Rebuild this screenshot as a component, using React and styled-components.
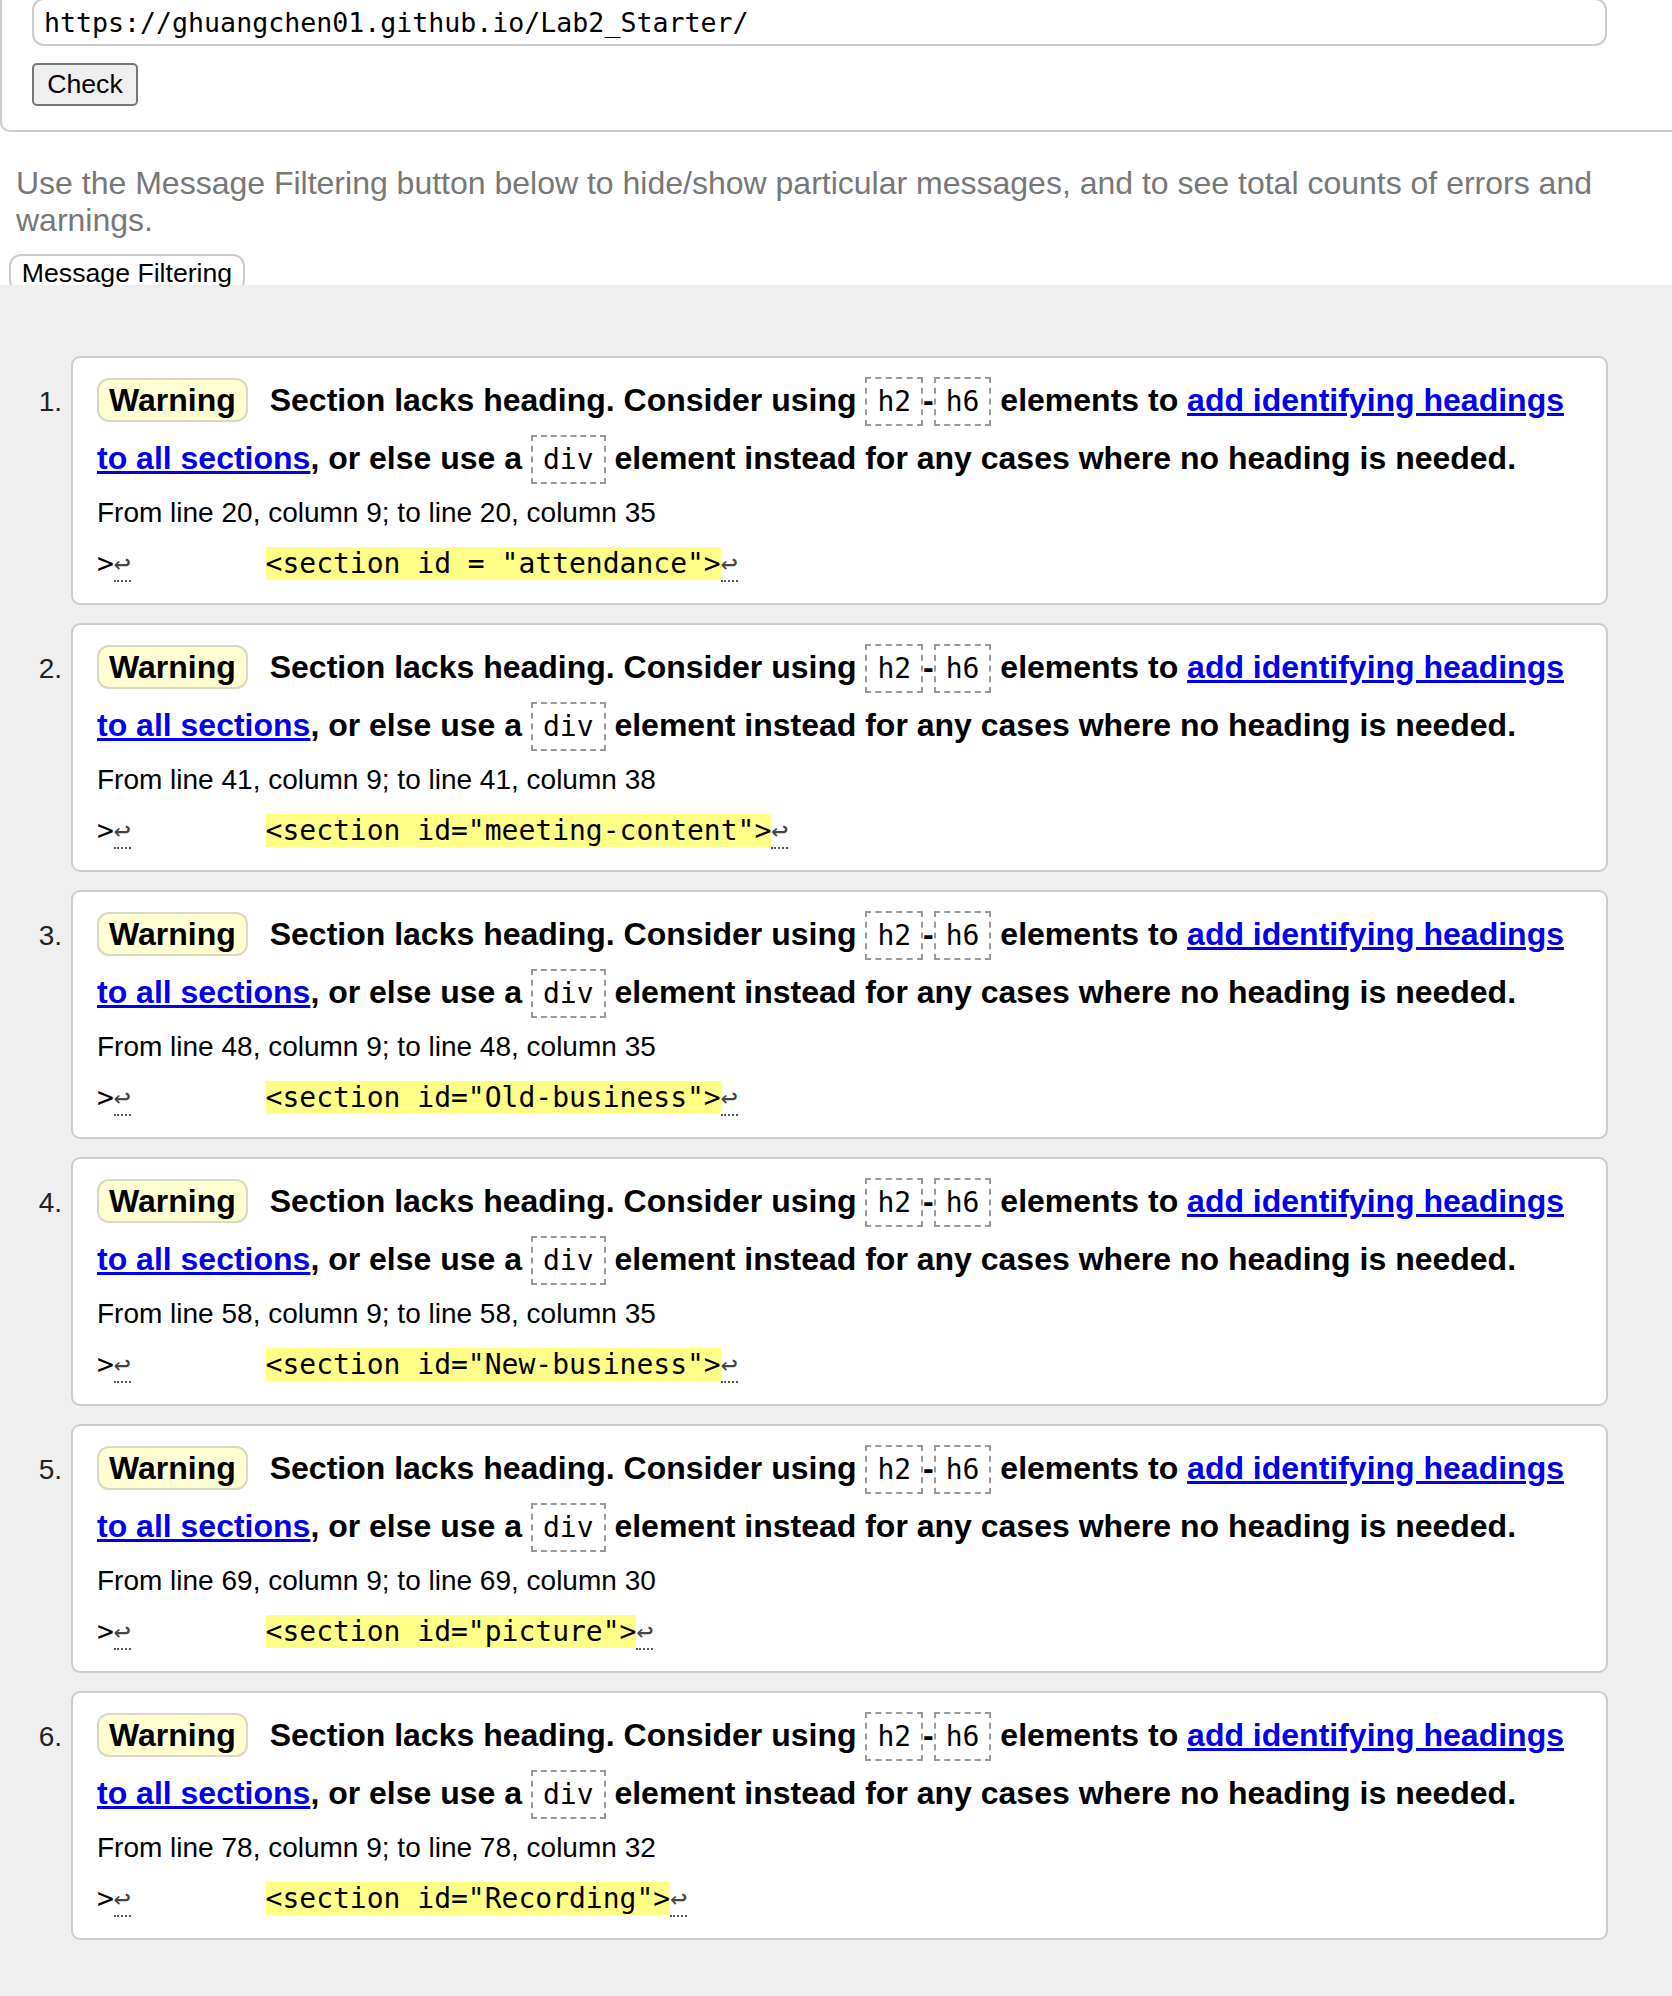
import React from "react";
import styled, { createGlobalStyle } from "styled-components";

const GlobalStyle = createGlobalStyle`
  html, body {
    margin: 0;
    padding: 0;
    background: #fff;
  }
  body {
    font-family: "Liberation Sans", Arial, sans-serif;
    color: #000;
  }
`;

const messages = [
  { from: 20, to: 20, colTo: 35, snippet: '<section id = "attendance">' },
  { from: 41, to: 41, colTo: 38, snippet: '<section id="meeting-content">' },
  { from: 48, to: 48, colTo: 35, snippet: '<section id="Old-business">' },
  { from: 58, to: 58, colTo: 35, snippet: '<section id="New-business">' },
  { from: 69, to: 69, colTo: 30, snippet: '<section id="picture">' },
  { from: 78, to: 78, colTo: 32, snippet: '<section id="Recording">' },
];

export default function App() {
  return (
    <>
      <GlobalStyle />
      <TopArea>
        <CheckForm>
          <UrlInput defaultValue="https://ghuangchen01.github.io/Lab2_Starter/" />
          <CheckButton>Check</CheckButton>
        </CheckForm>
        <Hint>
          Use the Message Filtering button below to hide/show particular messages, and to see total
          counts of errors and warnings.
        </Hint>
        <FilterButton>Message Filtering</FilterButton>
      </TopArea>

      <Results>
        <MessageList>
          {messages.map((m, i) => (
            <MessageRow key={i}>
              <Num>{i + 1}.</Num>
              <Card>
                <MessageText>
                  <Badge>Warning</Badge> Section lacks heading. Consider using{" "}
                  <InlineCode>h2</InlineCode>-<InlineCode>h6</InlineCode> elements to{" "}
                  <DocLink href="#">add identifying headings to all sections</DocLink>, or else
                  use a <InlineCode>div</InlineCode> element instead for any cases where no
                  heading is needed.
                </MessageText>
                <Location>
                  From line {m.from}, column 9; to line {m.to}, column {m.colTo}
                </Location>
                <Extract>
                  {">"}
                  <LineBreak title="Line break">↩</LineBreak>
                  {"        "}
                  <Highlight>{m.snippet}</Highlight>
                  <LineBreak title="Line break">↩</LineBreak>
                </Extract>
              </Card>
            </MessageRow>
          ))}
        </MessageList>
      </Results>
    </>
  );
}

const TopArea = styled.div`
  display: flow-root;
  background: #fff;
`;

const CheckForm = styled.form`
  margin-top: -2px;
  padding: 0 0 24px 30px;
  border-left: 2px solid #ccc;
  border-bottom: 2px solid #ccc;
  border-bottom-left-radius: 10px;
`;

const UrlInput = styled.input`
  display: block;
  box-sizing: border-box;
  width: 1575px;
  height: 48px;
  margin: 0 0 17px;
  padding: 0 10px;
  border: 2px solid #ccc;
  border-radius: 12px;
  font-family: "DejaVu Sans Mono", Menlo, monospace;
  font-size: 26.6px;
  color: #000;
  background: #fff;
  outline: none;
`;

const CheckButton = styled.button`
  display: block;
  box-sizing: border-box;
  width: 106px;
  height: 43px;
  padding: 0;
  border: 2px solid #777;
  border-radius: 5px;
  background: #efefef;
  font-family: "Liberation Sans", Arial, sans-serif;
  font-size: 26.67px;
  color: #000;
`;

const Hint = styled.p`
  margin: 33px 16px 15px;
  font-size: 32px;
  line-height: 37px;
  color: #777;
`;

const FilterButton = styled.button`
  display: block;
  box-sizing: border-box;
  width: 236px;
  height: 38px;
  margin: 0 0 -7px 9px;
  padding: 0;
  border: 2px solid #ccc;
  border-radius: 12px;
  background: #fff;
  font-family: "Liberation Sans", Arial, sans-serif;
  font-size: 26.67px;
  color: #000;
`;

const Results = styled.div`
  background: #efefef;
  padding: 71px 0 60px;
`;

const MessageList = styled.ol`
  list-style: none;
  margin: 0;
  padding: 0;
  display: flex;
  flex-direction: column;
  gap: 18px;
`;

const MessageRow = styled.li`
  display: flex;
  align-items: baseline;
  gap: 9px;
`;

const Num = styled.span`
  flex: 0 0 62px;
  text-align: right;
  font-size: 28px;
  color: #222;
`;

const Card = styled.div`
  box-sizing: border-box;
  width: 1537px;
  padding: 13px 24px 23px;
  background: #fff;
  border: 2px solid #ccc;
  border-radius: 9px;
`;

const MessageText = styled.p`
  margin: 0;
  font-size: 32px;
  line-height: 58px;
  font-weight: bold;
`;

const Badge = styled.strong`
  margin-right: 13px;
  padding: 2px 10px;
  background: #ffffd2;
  border: 2px solid #d9d9c4;
  border-radius: 12px;
`;

const InlineCode = styled.code`
  padding: 6px 10px;
  border: 2px dashed #999;
  font-family: "DejaVu Sans Mono", Menlo, monospace;
  font-size: 28px;
  line-height: 33px;
  font-weight: normal;
`;

const DocLink = styled.a`
  color: #0000ee;
  text-decoration: underline;
`;

const Location = styled.p`
  margin: 10px 0 0;
  font-size: 28px;
  line-height: 32px;
`;

const Extract = styled.p`
  margin: 18px 0 0;
  font-family: "DejaVu Sans Mono", Menlo, monospace;
  font-size: 28px;
  line-height: 33px;
  white-space: pre;
`;

const LineBreak = styled.span`
  color: #444;
  line-height: 1;
  border-bottom: 2px dotted #555;
`;

const Highlight = styled.b`
  font-weight: normal;
  background: #ffff88;
`;
